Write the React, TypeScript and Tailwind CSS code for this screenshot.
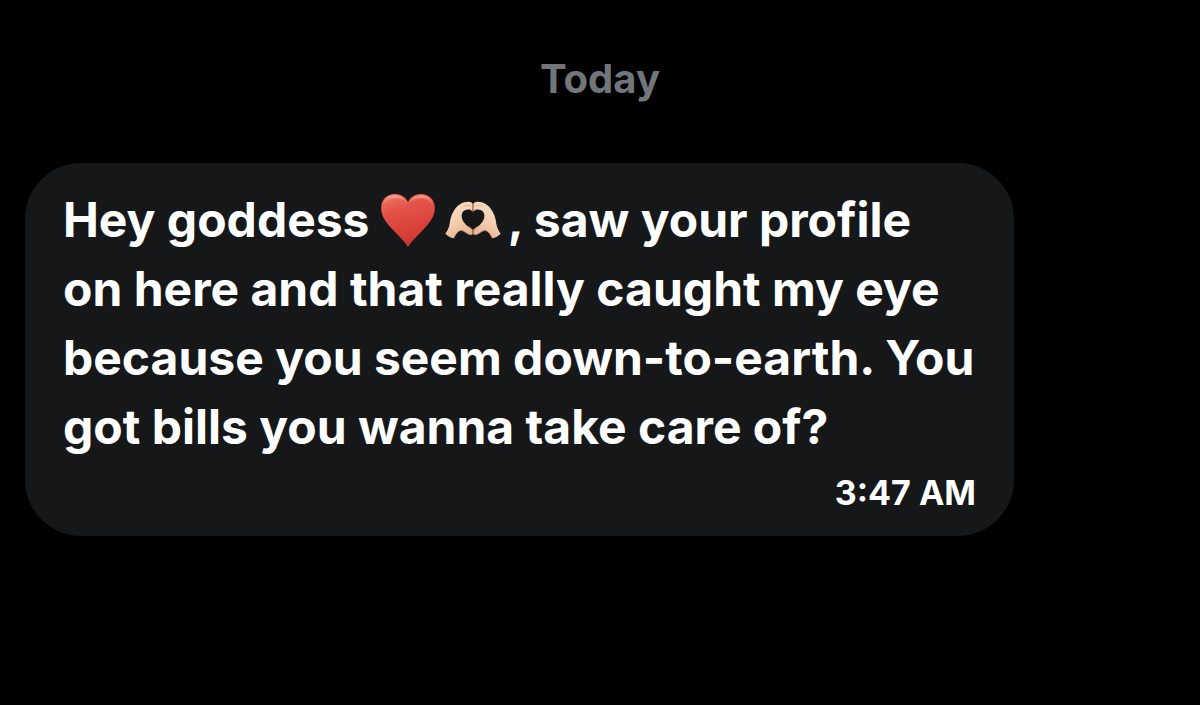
import React from "react";

const HeartEmoji = () => (
  <svg
    role="img"
    aria-label="red heart"
    viewBox="33 27 160 158"
    className="inline-block h-[53px] w-[54px] align-[-10px]"
  >
    <defs>
      <linearGradient id="heartFill" x1="0.2" y1="0" x2="0.5" y2="1">
        <stop offset="0" stopColor="#ee7766" />
        <stop offset="0.3" stopColor="#e4534a" />
        <stop offset="0.7" stopColor="#d8413a" />
        <stop offset="1" stopColor="#c9372f" />
      </linearGradient>
      <linearGradient id="heartShine" x1="0" y1="0" x2="0" y2="1">
        <stop offset="0" stopColor="#f9b3a4" stopOpacity="0.7" />
        <stop offset="1" stopColor="#f08a7a" stopOpacity="0.1" />
      </linearGradient>
    </defs>
    <path
      d="M113 185C106 173 92 158 75 141C52 118 33 97 33 69C33 43 51 27 74 27C92 27 106 36 113 51C120 36 134 27 152 27C175 27 193 43 193 69C193 97 174 118 151 141C134 158 120 173 113 185Z"
      fill="url(#heartFill)"
    />
    <path
      d="M38 66C39 45 53 31 74 31C90 31 103 40 109 54C99 43 87 38 74 39C56 40 44 50 38 66Z"
      fill="url(#heartShine)"
    />
    <path
      d="M188 66C187 45 173 31 152 31C136 31 123 40 117 54C127 43 139 38 152 39C170 40 182 50 188 66Z"
      fill="url(#heartShine)"
    />
  </svg>
);

// left hand, the right one is the same shape mirrored
const Hand = () => (
  <>
    <path
      d="M226 144C232 136 237 126 239 115C240 103 243 90 250 78C258 64 270 53 283 50C294 47 304 48 308 54C309 60 309 68 308 77C304 73 299 71 293 72C281 72 275 80 275 90C275 104 284 114 294 122C300 126 305 129 308 133C309 138 309 142 307 146C302 149 294 146 286 140C279 135 272 133 266 137C259 142 255 150 251 158C242 156 232 151 226 144Z"
      fill="url(#skin)"
    />
    <path
      d="M251 158C255 150 259 142 266 137C272 133 279 135 286 140C294 146 302 149 307 146"
      fill="none"
      stroke="#c78a6a"
      strokeWidth="2"
    />
    <path
      d="M281 62C288 57 296 58 303 62"
      fill="none"
      stroke="#d6a080"
      strokeWidth="2"
    />
    <path
      d="M299 72C303 73 306 75 308 77M297 124C303 128 306 131 308 134"
      fill="none"
      stroke="#bd765a"
      strokeWidth="3"
    />
    <path
      d="M308 54V77M308 133V146"
      fill="none"
      stroke="#a5654b"
      strokeWidth="2"
    />
  </>
);

const HeartHandsEmoji = () => (
  <svg
    role="img"
    aria-label="heart hands"
    viewBox="225 46 168 114"
    className="mr-[7px] ml-[10px] inline-block h-[38px] w-[56px] align-[-2px]"
  >
    <defs>
      <linearGradient id="skin" x1="0" y1="0" x2="0.4" y2="1">
        <stop offset="0" stopColor="#fae0c6" />
        <stop offset="0.6" stopColor="#f5cfb0" />
        <stop offset="1" stopColor="#e8b896" />
      </linearGradient>
    </defs>
    <Hand />
    <g transform="translate(618 0) scale(-1 1)">
      <Hand />
    </g>
  </svg>
);

type MessageProps = {
  time: string;
  children: React.ReactNode;
};

const Message = ({ time, children }: MessageProps) => {
  return (
    <article className="w-[86%] rounded-[56px] bg-[#161719] px-[38px] pt-[22px] pb-[11px] text-white">
      <p className="text-[48px] leading-[69px] font-bold">{children}</p>
      <div className="text-right text-[34px] leading-[64px] font-bold">
        <time>{time}</time>
      </div>
    </article>
  );
};

export default function App() {
  return (
    <main className="min-h-screen bg-black px-[25px] pt-[51px] font-['Inter',sans-serif]">
      <h2 className="text-center text-[40px] leading-[56px] font-bold text-[#71767b]">
        Today
      </h2>
      <div className="mt-14">
        <Message time="3:47 AM">
          Hey goddess <HeartEmoji />
          <HeartHandsEmoji />, saw your profile on here and that really caught
          my eye because you seem down-to-earth. You got bills you wanna take
          care of?
        </Message>
      </div>
    </main>
  );
}
